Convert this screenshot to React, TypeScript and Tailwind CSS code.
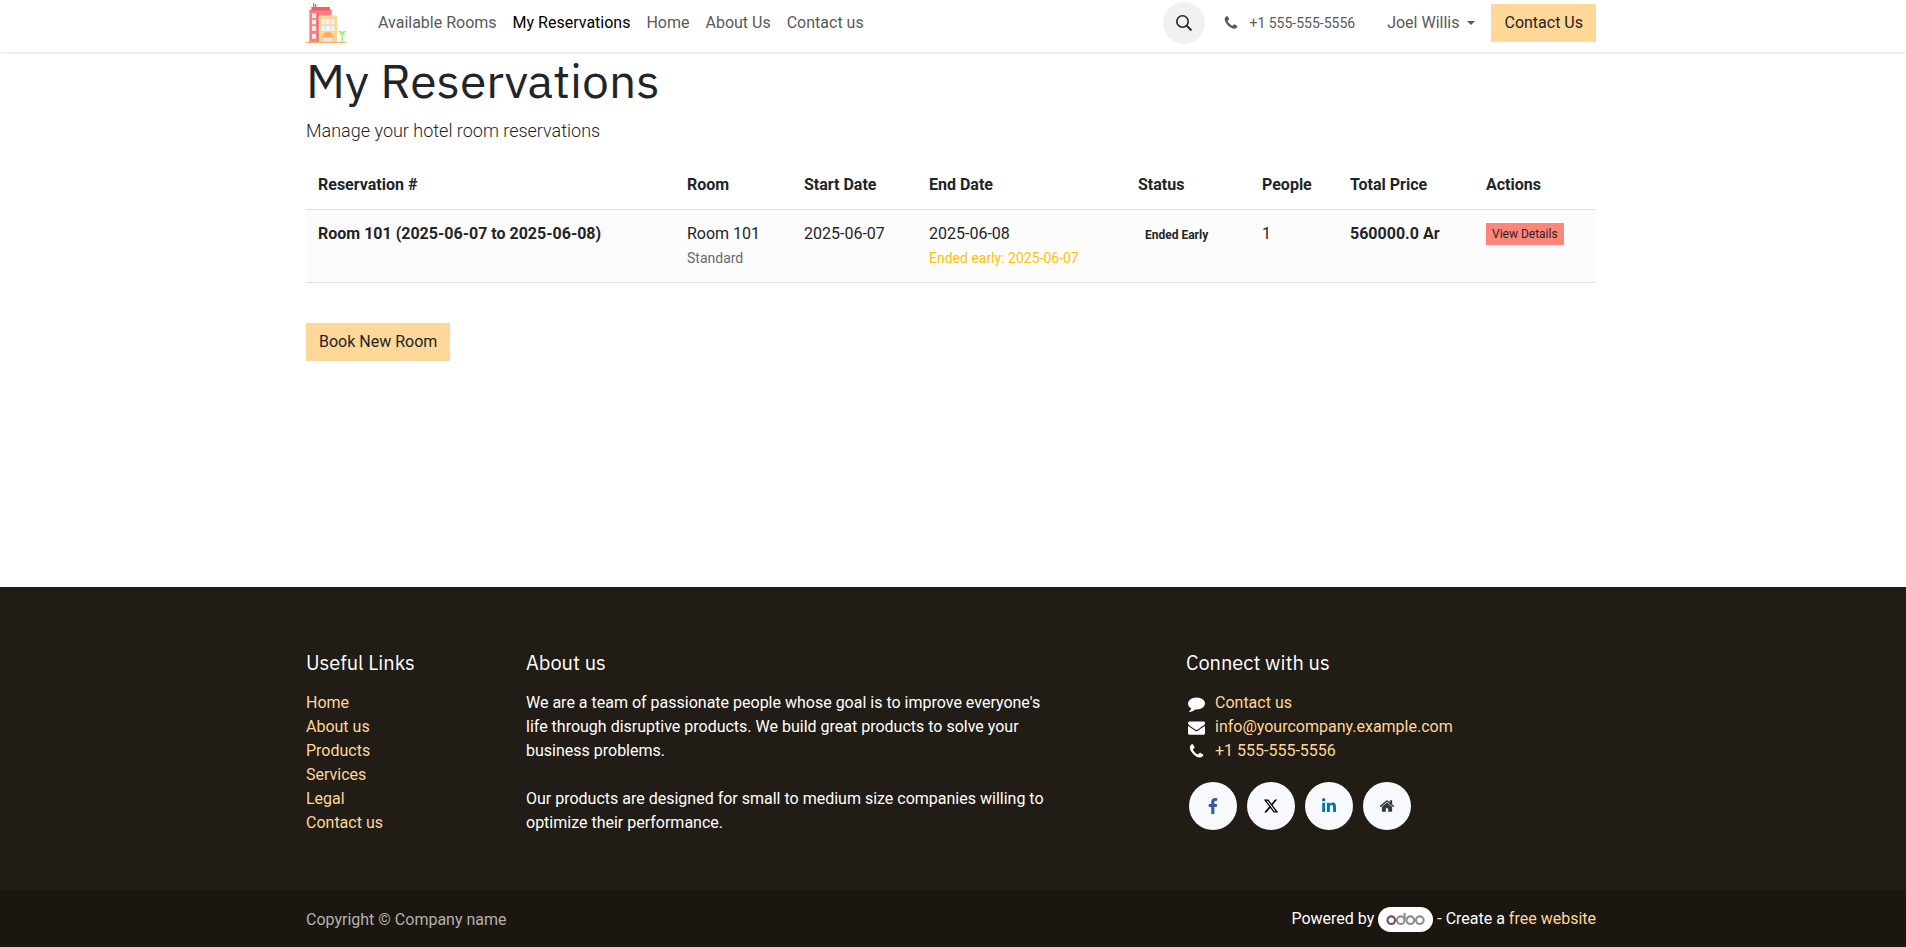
import { FaFacebookF, FaLinkedinIn } from "react-icons/fa";
import { FaXTwitter } from "react-icons/fa6";

const navItems = [
  { label: "Available Rooms", active: false },
  { label: "My Reservations", active: true },
  { label: "Home", active: false },
  { label: "About Us", active: false },
  { label: "Contact us", active: false },
];

const usefulLinks = ["Home", "About us", "Products", "Services", "Legal", "Contact us"];

const columns = [
  { label: "Reservation #", width: "w-[369px]" },
  { label: "Room", width: "w-[117px]" },
  { label: "Start Date", width: "w-[125px]" },
  { label: "End Date", width: "w-[209px]" },
  { label: "Status", width: "w-[124px]" },
  { label: "People", width: "w-[88px]" },
  { label: "Total Price", width: "w-[136px]" },
  { label: "Actions", width: "w-[122px]" },
];

const PHONE =
  "M1600 1240q0 27-10 70.5t-21 68.5q-21 50-122 106-94 51-186 51-27 0-53-3.5t-57.5-12.5-47-14.5-55.5-20.5-49-18q-98-35-175-83-127-79-264-216t-216-264q-48-77-83-175-3-9-18-49t-20.5-55.5-14.5-47-12.5-57.5-3.5-53q0-92 51-186 56-101 106-122 25-11 68.5-21t70.5-10q14 0 21 3 18 6 53 76 11 19 30 54t35 63.5 31 53.5q3 4 17.5 25t21.5 35.5 7 28.5q0 20-28.5 50t-62 55-62 53-28.5 46q0 9 5 22.5t8.5 20.5 14 24 11.5 19q76 137 174 235t235 174q2 1 19 11.5t24 14 20.5 8.5 22.5 5q18 0 46-28.5t53-62 55-62 50-28.5q14 0 28.5 7t35.5 21.5 25 17.5q25 15 53.5 31t63.5 35 54 30q70 35 76 53 3 7 3 21z";
const COMMENT =
  "M1792 896q0 174-120 321.5t-326 233-450 85.5q-70 0-145-8-198 175-460 242-49 14-114 22-17 2-30.5-9t-17.5-29v-1q-3-4-.5-12t2-10 4.5-9.5l6-9 7-8.5 8-9q7-8 31-34.5t34.5-38 31-39.5 32.5-51 27-59 26-76q-157-89-247.5-220t-90.5-281q0-130 71-248.5t191-204.5 286-136.5 348-50.5q244 0 450 85.5t326 233 120 321.5z";
const ENVELOPE =
  "M1792 710v794q0 66-47 113t-113 47h-1472q-66 0-113-47t-47-113v-794q44 49 101 87 362 246 497 345 57 42 92.5 65.5t94.5 48 110 24.5h2q51 0 110-24.5t94.5-48 92.5-65.5q170-123 498-345 57-39 100-87zm0-294q0 79-49 151t-122 123q-376 261-468 325-10 7-42.5 31t-54 38.5-52 32.5-57.5 27-50 9h-2q-23 0-50-9t-57.5-27-52-32.5-54-38.5-42.5-31q-91-64-262-182.5t-205-142.5q-62-42-117-115.5t-55-136.5q0-78 41.5-130t118.5-52h1472q65 0 112.5 47t47.5 113z";
const HOUSE =
  "M1472 992v480q0 26-19 45t-45 19h-384v-384h-256v384h-384q-26 0-45-19t-19-45v-480q0-1 .5-3t.5-3l575-474 575 474q1 2 1 6zm223-69l-62 74q-8 9-21 11h-3q-13 0-21-7l-692-577-692 577q-12 8-24 7-13-2-21-11l-62-74q-8-10-7-23.5t11-21.5l719-599q32-26 76-26t76 26l244 204v-195q0-14 9-23t23-9h192q14 0 23 9t9 23v408l219 182q10 8 11 21.5t-7 23.5z";

function Glyph({ d, className }: { d: string; className: string }) {
  return (
    <svg viewBox="0 0 1792 1792" className={className} fill="currentColor" aria-hidden="true">
      <path d={d} />
    </svg>
  );
}

function HotelLogo() {
  return (
    <svg viewBox="18 9 120 120" className="size-10" aria-hidden="true">
      <path fill="#e0696b" d="M39 9h4v13h-4zM45 12h4v10h-4z" />
      <path fill="#e96264" d="M34 21h56v10H34z" />
      <path fill="#ff7e80" d="M28 30h67v96H28z" />
      <path fill="#f3686c" d="M28 30h67v2H28zM51 36h5v90h-5z" />
      <path fill="#ffd493" d="M56 47h55v79H56z" />
      <path fill="#ffe1b0" d="M56 47h55v3H56z" />
      <path fill="#e6f1f7" d="M36 40h12v14H36zM36 59h12v14H36zM36 78h12v14H36zM36 102h12v14H36z" />
      <path fill="#e9f4f8" d="M64 57h12v16H64zM78 57h12v16H78zM92 57h12v16H92zM64 77h12v16H64zM78 77h12v16H78zM92 77h12v16H92z" />
      <path fill="#ffab62" d="M69 113q0-17 15-17t15 17z" />
      <path fill="#dcebf3" d="M72 113h11v13H72zM85 113h11v13H85z" />
      <path fill="#a4e080" d="M125 101h4v25h-4z" />
      <path fill="#a3ea82" d="M115 94q8-3 12 2 4-5 11-2v3l-7 2 4 5-3 2-5-5-6 5-3-2 4-5-7-2z" />
      <path fill="#ffb066" d="M18 125h120v4H18z" />
    </svg>
  );
}

function OdooMark() {
  return (
    <svg viewBox="0 0 55 25" className="h-[25px] w-[55px]" role="img" aria-label="Odoo">
      <rect width="55" height="25" rx="12.5" fill="#fff" />
      <g fill="none" strokeWidth="2.1">
        <circle cx="13.3" cy="13.2" r="3.8" stroke="#714b67" />
        <g stroke="#8f8f8f">
          <circle cx="22.8" cy="13.2" r="3.8" />
          <path d="M26.6 6v7.4" />
          <circle cx="32.3" cy="13.2" r="3.8" />
          <circle cx="41.8" cy="13.2" r="3.8" />
        </g>
      </g>
    </svg>
  );
}

const container = "mx-auto w-full max-w-[1320px] px-[15px]";
const heading = "font-['IBM_Plex_Sans','Noto_Sans',sans-serif]";
const footerLink = "text-[#ffd799] hover:underline";
const social = "flex size-12 items-center justify-center rounded-full bg-[#f8f9fc]";

export default function App() {
  return (
    <div className="flex min-h-screen flex-col bg-white font-[Roboto,sans-serif] text-base text-[#212529]">
      <header className="border-b border-[#ececec] pr-1 shadow-[0_1px_2px_rgba(0,0,0,0.06)]">
        <div className={`${container} flex h-[52px] items-start`}>
          <a href="#" aria-label="Hotel home" className="mt-[3px] mr-8">
            <HotelLogo />
          </a>
          <nav className="mt-[11px] flex gap-4 leading-6">
            {navItems.map((item) => (
              <a key={item.label} href="#" className={item.active ? "text-black" : "text-[#595959]"}>
                {item.label}
              </a>
            ))}
          </nav>
          <div className="mt-0.5 ml-auto flex items-center">
            <button type="button" aria-label="Search" className="flex size-[42px] items-center justify-center rounded-full bg-[#f1f1f1]">
              <svg viewBox="0 0 16 16" className="size-4" fill="none" stroke="#212529" strokeWidth="1.6" aria-hidden="true">
                <circle cx="6.5" cy="6.5" r="5.7" />
                <path d="M10.6 10.6L15.4 15.4" strokeWidth="2" />
              </svg>
            </button>
            <a href="#" className="ml-[18px] flex items-center gap-2.5 text-sm text-[#595959]">
              <Glyph d={PHONE} className="size-4" />
              +1 555-555-5556
            </a>
            <button type="button" className="ml-8 flex items-center gap-2 text-[#595959]">
              Joel Willis
              <svg viewBox="0 0 8 4" className="h-1 w-2" fill="currentColor" aria-hidden="true">
                <path d="M0 0h8L4 4z" />
              </svg>
            </button>
            <a href="#" className="ml-4 bg-[#ffd799] px-[13px] py-[7px] leading-6">
              Contact Us
            </a>
          </div>
        </div>
      </header>

      <main className="flex-1 pr-1">
        <div className={container}>
          <h1 className={`${heading} text-[48px] leading-[54px]`}>My Reservations</h1>
          <p className="mt-2.5 text-lg leading-[27px] font-light">Manage your hotel room reservations</p>

          <table className="mt-[17px] w-full table-fixed text-left">
            <colgroup>
              {columns.map((c) => (
                <col key={c.label} className={c.width} />
              ))}
            </colgroup>
            <thead>
              <tr className="border-b border-[#dee0e2]">
                {columns.map((c) => (
                  <th key={c.label} scope="col" className="p-3 leading-6 font-bold">
                    {c.label}
                  </th>
                ))}
              </tr>
            </thead>
            <tbody>
              <tr className="border-b border-[#dee0e2] bg-[#fcfcfc] align-top leading-6">
                <td className="p-3 font-bold">Room 101 (2025-06-07 to 2025-06-08)</td>
                <td className="p-3">
                  Room 101
                  <small className="block text-sm leading-6 text-[#666a6d]">Standard</small>
                </td>
                <td className="p-3">2025-06-07</td>
                <td className="p-3 whitespace-nowrap">
                  2025-06-08
                  <small className="block text-sm leading-6 text-[#ffc107]">Ended early: 2025-06-07</small>
                </td>
                <td className="p-3">
                  <span className="px-[7px] text-xs leading-6 font-bold">Ended Early</span>
                </td>
                <td className="p-3">1</td>
                <td className="p-3 font-bold">560000.0 Ar</td>
                <td className="p-3">
                  <a href="#" className="mt-px inline-block bg-[#ff8578] px-1.5 py-0.5 align-top text-xs leading-[18px]">
                    View Details
                  </a>
                </td>
              </tr>
            </tbody>
          </table>

          <a href="#" className="mt-10 inline-block bg-[#ffd799] px-[13px] py-[7px] leading-6">
            Book New Room
          </a>
        </div>
      </main>

      <footer className="bg-[#211c15] text-white">
        <div className="pr-1">
          <div className={`${container} grid grid-cols-12 gap-x-[30px] pt-16 pb-14 leading-6`}>
            <section className="col-span-2">
              <h2 className={`${heading} mb-4 text-xl leading-6`}>Useful Links</h2>
              <ul>
                {usefulLinks.map((l) => (
                  <li key={l}>
                    <a href="#" className={footerLink}>{l}</a>
                  </li>
                ))}
              </ul>
            </section>
            <section className="col-span-5">
              <h2 className={`${heading} mb-4 text-xl leading-6`}>About us</h2>
              <p>
                We are a team of passionate people whose goal is to improve everyone's life through disruptive products. We
                build great products to solve your business problems.
              </p>
              <p className="mt-6">
                Our products are designed for small to medium size companies willing to optimize their performance.
              </p>
            </section>
            <section className="col-span-4 col-start-9">
              <h2 className={`${heading} mb-4 text-xl leading-6`}>Connect with us</h2>
              <ul className="pl-0.5">
                <li className="flex items-center gap-2.5">
                  <Glyph d={COMMENT} className="size-[17px]" />
                  <a href="#" className={footerLink}>Contact us</a>
                </li>
                <li className="flex items-center gap-2.5">
                  <Glyph d={ENVELOPE} className="size-[17px]" />
                  <a href="#" className={footerLink}>info@yourcompany.example.com</a>
                </li>
                <li className="flex items-center gap-2.5">
                  <Glyph d={PHONE} className="size-[17px]" />
                  <a href="#" className={footerLink}>+1 555-555-5556</a>
                </li>
              </ul>
              <div className="mt-[19px] ml-[3px] flex gap-2.5">
                <a href="#" aria-label="Facebook" className={`${social} text-[#3b5998]`}>
                  <FaFacebookF className="size-4" />
                </a>
                <a href="#" aria-label="X" className={`${social} text-black`}>
                  <FaXTwitter className="size-4" />
                </a>
                <a href="#" aria-label="LinkedIn" className={`${social} text-[#0077b5]`}>
                  <FaLinkedinIn className="size-4" />
                </a>
                <a href="#" aria-label="Website" className={`${social} text-[#343a40]`}>
                  <Glyph d={HOUSE} className="size-4" />
                </a>
              </div>
            </section>
          </div>
        </div>
        <div className="bg-[#1b1610] pr-1">
          <div className={`${container} flex h-14 items-center justify-between`}>
            <span className="pt-0.5 text-[#b3b1af]">Copyright © Company name</span>
            <span className="flex items-center gap-1">
              Powered by
              <a href="#">
                <OdooMark />
              </a>
              <span>
                - Create a <a href="#" className={footerLink}>free website</a>
              </span>
            </span>
          </div>
        </div>
      </footer>
    </div>
  );
}
